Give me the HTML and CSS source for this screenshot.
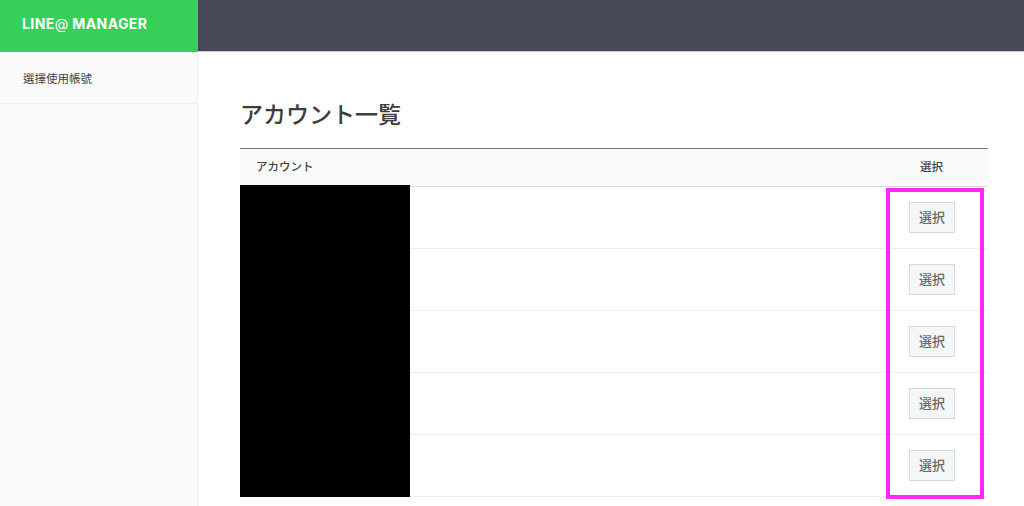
FILE: index.html
```html
<!DOCTYPE html>
<html lang="ja">
<head>
<meta charset="utf-8">
<title>LINE@ MANAGER</title>
<link rel="stylesheet" href="styles.css">
</head>
<body>
<header class="topbar">
  <div class="brand">LINE<span class="brand-at">@</span> MANAGER</div>
  <div class="topbar-fill"></div>
</header>
<div class="body-row">
  <nav class="sidebar">
    <div class="side-item" lang="zh-TW">選擇使用帳號</div>
  </nav>
  <main class="content">
    <h1 class="title">アカウント一覧</h1>
    <div class="table">
      <div class="thead">
        <div class="th-name">アカウント</div>
        <div class="th-select">選択</div>
      </div>
      <div class="row"><button class="btn">選択</button></div>
      <div class="row"><button class="btn">選択</button></div>
      <div class="row"><button class="btn">選択</button></div>
      <div class="row"><button class="btn">選択</button></div>
      <div class="row"><button class="btn">選択</button></div>
      <div class="redact"></div>
      <div class="highlight"></div>
    </div>
  </main>
</div>
</body>
</html>
```
FILE: styles.css
```css
* { box-sizing: border-box; }
html, body { margin: 0; height: 506px; overflow: hidden; background: #fff; }
body { font-family: "Noto Sans CJK JP", "Noto Sans", sans-serif; color: #3a3a3a; }
.topbar { display: flex; height: 52px; }
.brand {
  width: 198px; height: 52px; background: #36cf58; color: #fff;
  padding-left: 22px; font: 700 14px/48px Inter, "Noto Sans", sans-serif; letter-spacing: 0.4px;
}
.brand-at { font-weight: 400; }
.topbar-fill { flex: 1; background: #464958; border-bottom: 1px solid #c9cad0; }
.body-row { display: flex; height: 454px; }
.sidebar { width: 198px; background: #fafafa; border-right: 1px solid #eeeeee; }
.side-item {
  height: 52px; padding-left: 23px; border-bottom: 1px solid #eeeeee;
  font-size: 11.5px; line-height: 53px; color: #444; font-family: "Noto Sans CJK TC", sans-serif;
}
.content { flex: 1; padding: 0 36px 0 42px; }
.title { margin: 0; height: 96px; padding-top: 43px; font-size: 23px; line-height: 37px; font-weight: 500; color: #3d3d3d; }
.table { position: relative; width: 748px; border-top: 1px solid #777; }
.thead { display: flex; align-items: center; justify-content: space-between; height: 38px; padding-bottom: 3px; background: #fafafa; border-bottom: 1px solid #dddddd; font-size: 11.5px; font-weight: 500; color: #444; }
.th-name { padding-left: 16px; }
.th-select { width: 112px; padding-right: 1px; text-align: center; }
.row { display: flex; align-items: center; justify-content: flex-end; height: 62px; padding-right: 33px; border-bottom: 1px solid #eeeeee; }
.btn {
  width: 46px; height: 31px; padding: 0 0 2px; background: #f5f6f8; border: 1px solid #d5d8dd;
  font-family: "Noto Sans CJK JP", sans-serif; font-size: 13px; font-weight: 500; color: #6a6a6a;
}
.redact { position: absolute; left: 0; top: 36px; width: 170px; height: 312px; background: #000; }
.highlight { position: absolute; left: 646px; top: 39px; width: 98px; height: 311px; border: 4px solid #fc28f5; }
```
